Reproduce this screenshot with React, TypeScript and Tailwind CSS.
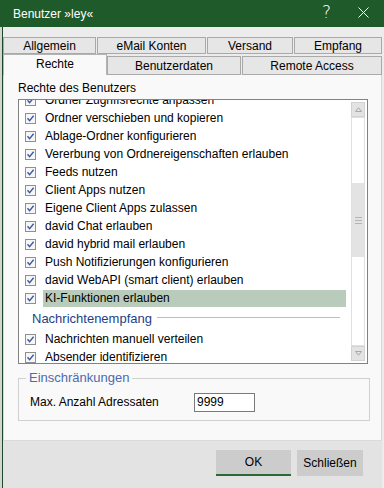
import React from "react";

const rights = [
  "Ordner verschieben und kopieren",
  "Ablage-Ordner konfigurieren",
  "Vererbung von Ordnereigenschaften erlauben",
  "Feeds nutzen",
  "Client Apps nutzen",
  "Eigene Client Apps zulassen",
  "david Chat erlauben",
  "david hybrid mail erlauben",
  "Push Notifizierungen konfigurieren",
  "david WebAPI (smart client) erlauben",
];

function Check() {
  return (
    <svg width="11" height="11" viewBox="0 0 11 11" className="shrink-0">
      <rect x="0.5" y="0.5" width="10" height="10" fill="#f6f6f6" stroke="#8e8f8f" />
      <path d="M2.5 5.3 L4.6 7.6 L8.6 2.8" fill="none" stroke="#3d58a0" strokeWidth="1.4" />
    </svg>
  );
}

function Row({ label, active }: { label: string; active?: boolean }) {
  return (
    <div className="h-[18px] flex items-center pl-[6px] gap-[7px] shrink-0">
      <Check />
      <div className={"flex-1 h-[17px] flex items-center pl-[2px] whitespace-nowrap overflow-hidden " + (active ? "bg-[#b9cbbb]" : "")}>
        {label}
      </div>
    </div>
  );
}

function Arrow({ up }: { up?: boolean }) {
  return (
    <svg width="7" height="5" viewBox="0 0 7 5">
      <path d={up ? "M0.5 4.5 L3.5 0.8 L6.5 4.5 Z" : "M0.5 0.5 L3.5 4.2 L6.5 0.5 Z"} fill="none" stroke="#a8a8a8" />
    </svg>
  );
}

export default function App() {
  return (
    <div className="w-[384px] h-[488px] flex flex-col overflow-hidden bg-[#ececec] text-[12px] leading-[14px] text-black font-['Liberation_Sans',Arial,sans-serif]">
      {/* Title bar */}
      <div className="h-[27px] shrink-0 bg-[#1f5a2b] flex items-center text-white pl-[13px]">
        <span>Benutzer »ley«</span>
        <span className="ml-auto mr-[27px] text-[17px] leading-none font-extralight font-['DejaVu_Sans',sans-serif] -mt-[3px]">?</span>
        <svg width="11" height="11" viewBox="0 0 11 11" className="mr-[15px] -mt-[3px]">
          <path d="M0.5 0.5 L10.5 10.5 M10.5 0.5 L0.5 10.5" stroke="#fff" strokeWidth="1" />
        </svg>
      </div>

      <div className="flex-1 flex">
        <div className="w-[2px] bg-[#d4d4d4]" />
        <div className="flex-1 flex flex-col border-l border-[#1b4a25] pr-[2px]">
          <div className="h-[10px] shrink-0" />

          {/* Tabs row 1 */}
          <div className="h-[17px] shrink-0 flex gap-[1px]">
            {[
              ["Allgemein", "w-[93px]"],
              ["eMail Konten", "w-[109px]"],
              ["Versand", "w-[86px]"],
              ["Empfang", "flex-1"],
            ].map(([t, w]) => (
              <div key={t} className={w + " border border-[#a9a9a9] bg-[#e6e6e6] flex items-center justify-center"}>
                {t}
              </div>
            ))}
          </div>

          {/* Tabs row 2 */}
          <div className="h-[21px] shrink-0 flex items-end">
            <div className="w-[104px] h-full border border-b-0 border-[#b4b4b4] bg-[#f9f9f9] flex items-center justify-center pb-[2px]">
              Rechte
            </div>
            <div className="w-[134px] h-[19px] border border-[#a9a9a9] bg-[#e6e6e6] flex items-center justify-center">
              Benutzerdaten
            </div>
            <div className="flex-1 ml-[1px] h-[19px] border border-[#a9a9a9] bg-[#e6e6e6] flex items-center justify-center">
              Remote Access
            </div>
          </div>

          {/* Panel */}
          <div className="flex-1 bg-[#f9f9f9] border-l border-r border-[#d6d6d6] flex flex-col pl-[14px] pt-[6px]">
            <div>Rechte des Benutzers</div>

            <div className="mt-[4px] w-[350px] h-[265px] border border-[#828282] bg-white flex overflow-hidden">
              <div className="flex-1 flex flex-col pr-[5px] overflow-hidden">
                <div className="-mt-[9px] flex flex-col">
                  <Row label="Ordner Zugriffsrechte anpassen" />
                  {rights.map((r) => (
                    <Row key={r} label={r} />
                  ))}
                  <Row label="KI-Funktionen erlauben" active />
                  <div className="h-[23px] shrink-0 flex items-center pl-[13px] pr-[6px] gap-[5px]">
                    <span className="text-[#243f86] text-[13px] whitespace-nowrap">Nachrichtenempfang</span>
                    <div className="flex-1 h-[1px] bg-[#aec1ce] -mt-[2px]" />
                  </div>
                  <Row label="Nachrichten manuell verteilen" />
                  <Row label="Absender identifizieren" />
                </div>
              </div>

              {/* Scrollbar */}
              <div className="w-[14px] mr-[2px] flex flex-col pt-[2px] pb-[2px]">
                <div className="h-[15px] shrink-0 bg-[#e3e3e3] border border-[#d2d2d2] flex items-center justify-center">
                  <Arrow up />
                </div>
                <div className="flex-1 border border-[#e0e0e0] flex flex-col">
                  <div className="h-[65px]" />
                  <div className="h-[74px] bg-[#e3e3e3] flex flex-col items-center justify-center gap-[2px]">
                    <div className="w-[7px] h-[1px] bg-[#b4b4b4]" />
                    <div className="w-[7px] h-[1px] bg-[#b4b4b4]" />
                    <div className="w-[7px] h-[1px] bg-[#b4b4b4]" />
                  </div>
                </div>
                <div className="h-[15px] shrink-0 bg-[#e3e3e3] border border-[#d2d2d2] flex items-center justify-center">
                  <Arrow />
                </div>
              </div>
            </div>

            {/* Einschränkungen */}
            <div className="relative mt-[14px] w-[352px] h-[43px] border border-[#d0d0d0] flex items-center pl-[11px] pt-[5px]">
              <span className="absolute -top-[8px] left-[7px] px-[3px] bg-[#f9f9f9] text-[#4d69b0] text-[13px]">Einschränkungen</span>
              <span className="w-[164px]">Max. Anzahl Adressaten</span>
              <div className="w-[61px] h-[19px] border border-[#7a7a7a] bg-white flex items-center pl-[2px]">9999</div>
            </div>
          </div>

          {/* Bottom bar */}
          <div className="h-[48px] shrink-0 bg-[#e3e3e3] border-t border-[#dadada] flex items-start justify-end pt-[9px] pr-[19px] gap-[6px]">
            <div className="w-[75px] h-[26px] bg-[#cccccc] border-b-2 border-[#2b6a37] flex items-center justify-center">OK</div>
            <div className="w-[66px] h-[26px] bg-[#cccccc] flex items-center justify-center">Schließen</div>
          </div>
        </div>
      </div>
    </div>
  );
}
